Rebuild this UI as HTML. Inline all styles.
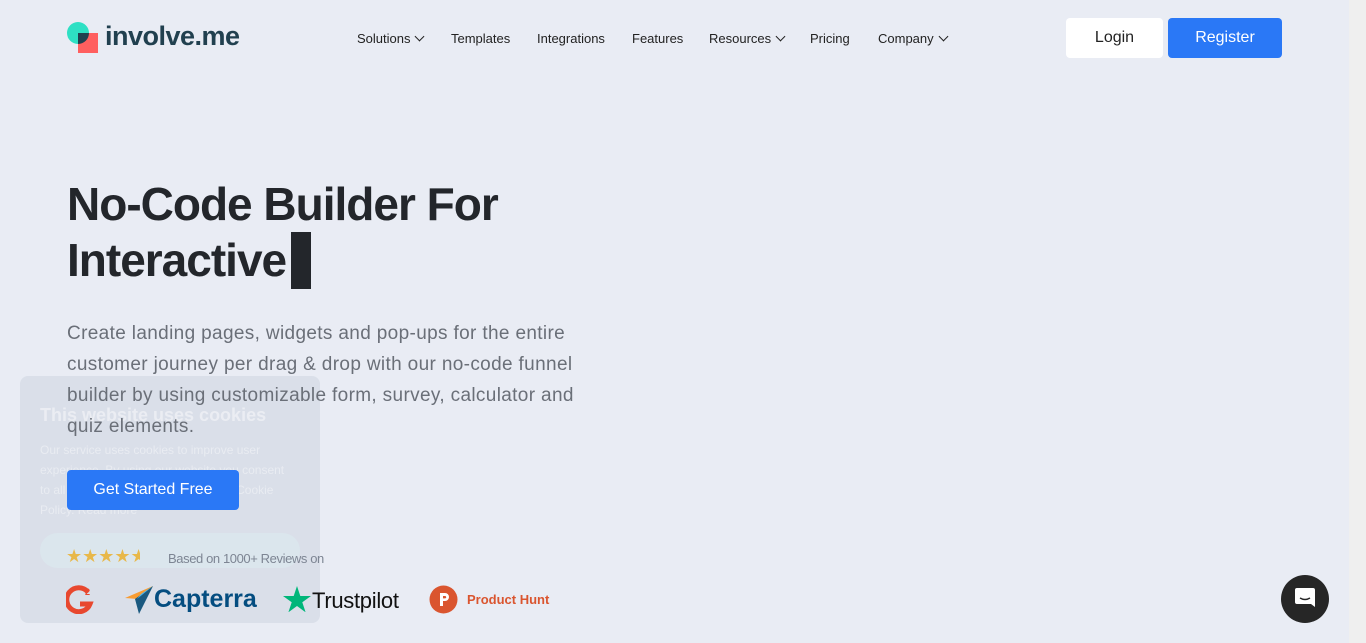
<!DOCTYPE html>
<html><head><meta charset="utf-8"><style>
*{margin:0;padding:0;box-sizing:border-box}
body{width:1366px;height:643px;overflow:hidden;background:#e9ecf4;font-family:"Liberation Sans",sans-serif;position:relative}
.sb{position:absolute;left:1349px;top:0;width:17px;height:643px;background:#efefef}
.nav{position:absolute;top:31px;font-size:13px;color:#222}
.nav span{position:absolute;white-space:nowrap}
.chev{display:inline-block;width:7px;height:7px;border-right:1.3px solid #222;border-bottom:1.3px solid #222;transform:rotate(45deg);margin-left:6px;position:relative;top:-3px}
.btn{position:absolute;border-radius:4px;font-size:16px;display:flex;align-items:center;justify-content:center;z-index:2}
h1{position:absolute;left:67px;top:176px;font-size:46px;line-height:56px;font-weight:bold;color:#23262b;letter-spacing:-1px;z-index:2}
.cur{display:inline-block;width:20px;height:57px;background:#23262b;vertical-align:top;margin-left:5px;position:relative;top:0px}
.p{position:absolute;left:67px;top:318px;width:530px;font-size:19px;letter-spacing:0.35px;line-height:31px;color:#6a6f78;z-index:2}
.cookie{position:absolute;left:20px;top:376px;width:300px;height:247px;background:rgba(205,214,224,.55);border-radius:8px}
.ct{position:absolute;left:40px;top:405px;font-size:18px;font-weight:bold;color:rgba(255,255,255,.45)}
.cp{position:absolute;left:40px;top:440px;width:250px;font-size:12px;line-height:20px;color:rgba(255,255,255,.4)}
.acc{position:absolute;left:40px;top:533px;width:260px;height:35px;border-radius:18px;background:rgba(220,235,240,.6)}
.z{z-index:2}
</style></head><body>
<div class="sb"></div>
<svg style="position:absolute;left:67px;top:22px" width="34" height="32"><circle cx="11" cy="11" r="11" fill="#2ee0c4"/><rect x="11" y="11" width="20" height="20" fill="#ff5f5f"/><path d="M11 11h11a11 11 0 0 1-11 11z" fill="#21404f"/></svg>
<div style="position:absolute;left:105px;top:21px;font-size:27px;font-weight:bold;color:#21404f;letter-spacing:-0.5px">involve.me</div>
<div class="nav">
<span style="left:357px">Solutions<i class="chev"></i></span>
<span style="left:451px">Templates</span>
<span style="left:537px">Integrations</span>
<span style="left:632px">Features</span>
<span style="left:709px">Resources<i class="chev"></i></span>
<span style="left:810px">Pricing</span>
<span style="left:878px">Company<i class="chev"></i></span>
</div>
<div class="btn" style="left:1066px;top:18px;width:97px;height:40px;background:#fff;color:#222">Login</div>
<div class="btn" style="left:1168px;top:18px;width:114px;height:40px;background:#2a78f6;color:#fff">Register</div>
<div class="cookie"></div>
<div class="ct">This website uses cookies</div>
<div class="cp">Our service uses cookies to improve user experience. By using our website you consent to all cookies in accordance with our Cookie Policy. Read more</div>
<div class="acc"></div>
<h1>No-Code Builder For<br>Interactive<span class="cur"></span></h1>
<div class="p">Create landing pages, widgets and pop-ups for the entire customer journey per drag &amp; drop with our no-code funnel builder by using customizable form, survey, calculator and quiz elements.</div>
<div class="btn" style="left:67px;top:470px;width:172px;height:40px;background:#2a78f6;color:#fff;font-size:16px">Get Started Free</div>
<div class="z" style="position:absolute;left:66px;top:546px;font-size:18px;color:#e8b84a;letter-spacing:0px">★★★★<span style="display:inline-block;width:9px;overflow:hidden;vertical-align:top">★</span></div>
<div class="z" style="position:absolute;left:168px;top:551px;font-size:13px;color:#7d8593;letter-spacing:-0.4px">Based on 1000+ Reviews on</div>
<svg class="z" style="position:absolute;left:66px;top:584px" width="30" height="30"><path d="M22 8A12 12 0 1 0 24 20H14" fill="none" stroke="#e8482f" stroke-width="5"/><text x="19" y="11" font-size="9" font-weight="bold" fill="#e8482f" font-family="Liberation Sans">2</text></svg>
<svg class="z" style="position:absolute;left:123px;top:585px" width="32" height="30"><path d="M2 13L30 1 14 14z" fill="#f79c33"/><path d="M30 1L12 14l4 15z" fill="#1a5980"/><path d="M30 1 14 14 18 9z" fill="#4fb5e8"/></svg>
<div class="z" style="position:absolute;left:154px;top:585px;font-size:25px;font-weight:bold;color:#044d80">Capterra</div>
<svg class="z" style="position:absolute;left:283px;top:586px" width="28" height="26"><path d="M14 0l3.3 10H28l-8.7 6.3 3.3 10L14 20l-8.6 6.3 3.3-10L0 10h10.7z" fill="#00b67a"/></svg>
<div class="z" style="position:absolute;left:312px;top:588px;font-size:22px;color:#111;letter-spacing:-0.3px">Trustpilot</div>
<svg class="z" style="position:absolute;left:429px;top:585px" width="29" height="29"><circle cx="14.5" cy="14.5" r="14" fill="#da552f"/><path d="M11 8h5a4 4 0 0 1 0 8h-2v5h-3z" fill="#fff"/><path d="M14 11h2a1.2 1.2 0 0 1 0 2.4h-2z" fill="#da552f"/></svg>
<div class="z" style="position:absolute;left:467px;top:592px;font-size:13px;font-weight:bold;color:#da552f">Product Hunt</div>
<div style="position:absolute;left:1281px;top:575px;width:48px;height:48px;border-radius:50%;background:#262626"></div>
<svg style="position:absolute;left:1293px;top:587px" width="24" height="24"><path d="M2 3a2 2 0 0 1 2-2h16a2 2 0 0 1 2 2v17l-4-3H4a2 2 0 0 1-2-2z" fill="#fff"/><path d="M7 11q5 3 10 0" stroke="#262626" stroke-width="1.5" fill="none"/></svg>
</body></html>
